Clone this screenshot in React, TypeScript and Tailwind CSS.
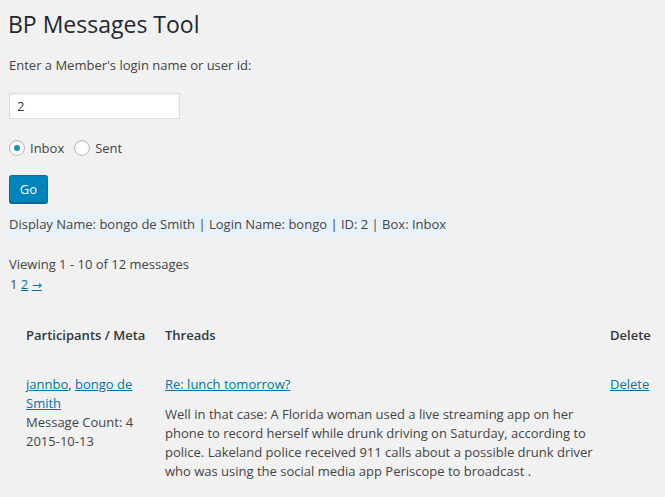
import React from "react";

const threadText =
  "Well in that case: A Florida woman used a live streaming app on her phone to record herself while drunk driving on Saturday, according to police. Lakeland police received 911 calls about a possible drunk driver who was using the social media app Periscope to broadcast .";

function Radio({ label, checked }: { label: string; checked?: boolean }) {
  return (
    <label className="flex items-center gap-[5px]">
      <span className="flex h-4 w-4 items-center justify-center rounded-full border border-[#b4b9be] bg-white shadow-[inset_0_1px_2px_rgba(0,0,0,0.1)]">
        {checked && <span className="h-[6px] w-[6px] rounded-full bg-[#1e8cbe]" />}
      </span>
      <span>{label}</span>
    </label>
  );
}

export default function App() {
  return (
    <div className="min-h-screen bg-[#f1f1f1] pl-2 pt-[10px] font-['Open_Sans',sans-serif] text-[13px] leading-[20px] text-[#444]">
      {/* HEADER */}
      <h1 className="text-[23px] leading-[29px] font-normal text-[#23282d]">BP Messages Tool</h1>

      {/* FORM */}
      <p className="mt-[16px] pl-px">Enter a Member's login name or user id:</p>
      <input
        type="text"
        defaultValue="2"
        className="mt-[18px] ml-px block h-[26px] w-[171px] border border-[#ddd] bg-white px-[7px] text-[13px] text-[#32373c] shadow-[inset_0_1px_2px_rgba(0,0,0,0.07)] outline-none"
      />
      <div className="mt-[21px] ml-px flex h-4 items-center gap-[10px]">
        <Radio label="Inbox" checked />
        <Radio label="Sent" />
      </div>
      <button className="mt-[19px] ml-px block h-[28px] w-[39px] rounded-[3px] border border-[#0073aa] border-b-[#006799] bg-[#0085ba] text-[13px] leading-[26px] text-white shadow-[0_1px_0_#006799]">
        Go
      </button>

      {/* MEMBER INFO */}
      <div className="mt-[8px]">
        <span className="inline-block bg-[#e8f1f8] py-[3px] pl-[1px] pr-[2px]">
          Display Name: bongo de Smith | Login Name: bongo | ID: 2 | Box: Inbox
        </span>
      </div>

      {/* PAGINATION */}
      <p className="mt-[17px] pl-px">Viewing 1 - 10 of 12 messages</p>
      <p className="pl-[2px]">
        1{" "}
        <a href="#" className="text-[#0073aa] underline">2</a>{" "}
        <a href="#" className="font-['DejaVu_Sans',sans-serif] text-[12px] text-[#0073aa] underline">&rarr;</a>
      </p>

      {/* MESSAGES TABLE */}
      <div className="mt-[31px] grid grid-cols-[139px_445px_1fr] pl-[18px] leading-[19.5px]">
        <div className="font-semibold text-[#32373c]">Participants / Meta</div>
        <div className="font-semibold text-[#32373c]">Threads</div>
        <div className="font-semibold text-[#32373c]">Delete</div>

        <div className="mt-[29px] pr-[10px] leading-[19px]">
          <a href="#" className="text-[#0073aa] underline">jannbo</a>
          {", "}
          <a href="#" className="text-[#0073aa] underline">bongo de Smith</a>
          <br />
          Message Count: 4
          <br />
          2015-10-13
        </div>
        <div className="mt-[29px] pr-[10px] leading-[19px]">
          <a href="#" className="text-[#0073aa] underline">Re: lunch tomorrow?</a>
          <p className="mt-[11px]">{threadText}</p>
        </div>
        <div className="mt-[29px] leading-[19px]">
          <a href="#" className="text-[#0073aa] underline">Delete</a>
        </div>
      </div>
    </div>
  );
}
